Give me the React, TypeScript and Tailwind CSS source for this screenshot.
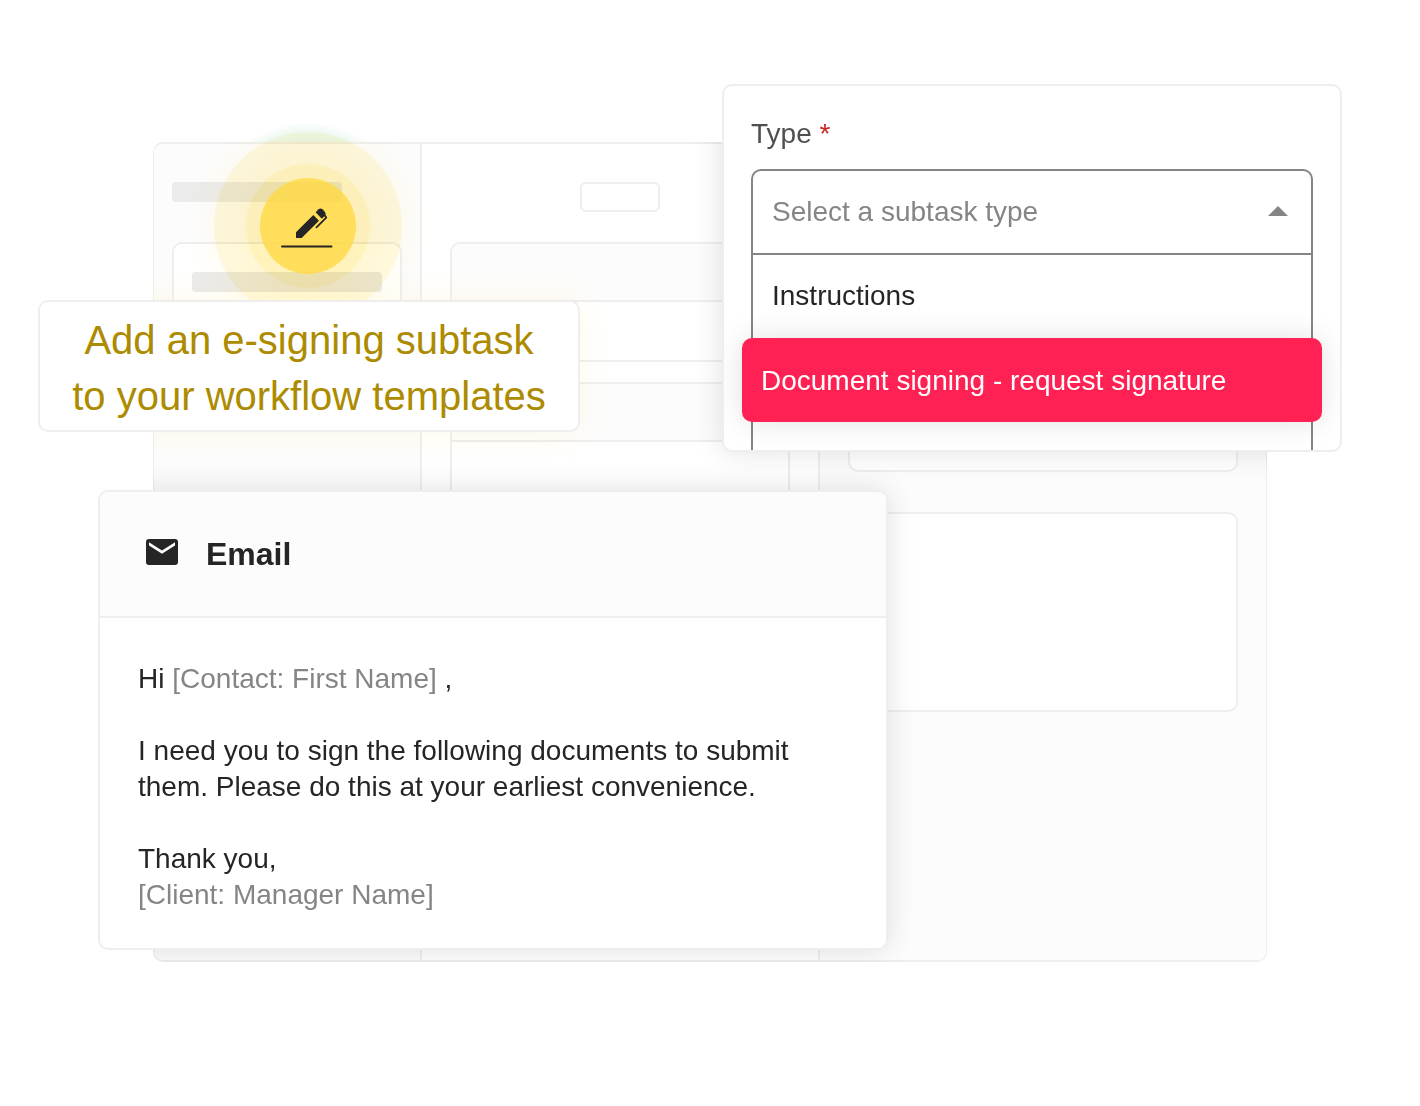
import { useState } from 'react'

const SUBTASK_TYPES = ['Instructions', 'Document signing - request signature']

function SigningBadge() {
  return (
    <svg width="240" height="240" viewBox="0 0 240 240" fill="none" aria-hidden="true">
      <defs>
        <radialGradient id="halo">
          <stop offset="0.5" stopColor="#ffdf60" stopOpacity="0.14" />
          <stop offset="0.78" stopColor="#ffdf60" stopOpacity="0.06" />
          <stop offset="1" stopColor="#ffdf60" stopOpacity="0" />
        </radialGradient>
        <radialGradient id="leaf">
          <stop offset="0.6" stopColor="#a8dcb8" stopOpacity="0.5" />
          <stop offset="0.9" stopColor="#a8dcb8" stopOpacity="0.2" />
          <stop offset="1" stopColor="#a8dcb8" stopOpacity="0" />
        </radialGradient>
        <clipPath id="aboveBoard">
          <rect width="240" height="36" />
        </clipPath>
        <clipPath id="onBoard">
          <rect y="36" width="240" height="204" />
        </clipPath>
      </defs>
      <g className="mix-blend-multiply">
        <circle cx="120" cy="120" r="120" fill="url(#halo)" clipPath="url(#onBoard)" />
        <circle cx="120" cy="120" r="94" fill="#ffdf60" fillOpacity="0.16" />
        <circle cx="120" cy="120" r="104" fill="url(#leaf)" clipPath="url(#aboveBoard)" />
        <circle cx="120" cy="120" r="62" fill="#ffdf60" fillOpacity="0.2" />
      </g>
      <circle cx="120" cy="120" r="48" fill="#ffd840" fillOpacity="0.78" />
      <path d="M108 132v-5.700l17.300-17.300 5.700 5.700L113.700 132z" fill="#252525" />
      <path d="M127.600 106.300l3-3q1.900-1.700 3.800 0l2.400 2.400q1.700 1.900 0.300 3.800l-3.300 3.300z" fill="#252525" />
      <path d="M136.500 109l1.700 2.600-10.200 10.200" stroke="#252525" strokeWidth="1.800" strokeLinejoin="round" />
      <path d="M94 140.500h49.500" stroke="#252525" strokeWidth="2" strokeLinecap="round" />
    </svg>
  )
}

function MailIcon() {
  return (
    <svg width="32" height="30" viewBox="0 0 32 30" aria-hidden="true">
      <rect width="32" height="26" rx="3" fill="#252525" />
      <path d="M3 3.200l13 8.300 13-8.300v3.200L16 14.700 3 6.400z" fill="#fcfcfc" />
    </svg>
  )
}

// Empty app layout behind the cards
function Board() {
  return (
    <div className="flex h-[820px] overflow-hidden rounded-[10px] border-x border-y-2 border-[#eeeeee] bg-white">
      <div className="w-[268px] shrink-0 border-r-2 border-[#eeeeee] bg-[#fcfcfc] px-[18px] pt-[38px]">
        <div className="h-5 w-[170px] rounded bg-[#ebebeb]" />
        <div className="mt-10 h-40 rounded-[10px] border-2 border-[#eeeeee] bg-white p-[18px] pt-7">
          <div className="h-5 rounded bg-[#ebebeb]" />
        </div>
      </div>

      <div className="min-w-0 flex-1 px-7 pt-[38px]">
        <div className="mx-auto h-[30px] w-20 rounded-md border-2 border-[#eeeeee]" />
        <div className="mt-[30px] h-[120px] overflow-hidden rounded-t-[10px] border-2 border-[#eeeeee]">
          <div className="h-[58px] border-b-2 border-[#eeeeee] bg-[#fcfcfc]" />
        </div>
        <div className="mt-5 h-60 border-2 border-[#eeeeee]">
          <div className="h-[58px] border-b-2 border-[#eeeeee] bg-[#fcfcfc]" />
        </div>
      </div>

      <div className="w-[448px] shrink-0 border-l-2 border-[#eeeeee] bg-[#fcfcfc] px-7 pt-[38px]">
        <div className="h-[290px] rounded-[10px] border-2 border-[#eeeeee] bg-white" />
        <div className="mt-10 h-[200px] rounded-[10px] border-2 border-[#eeeeee] bg-white" />
      </div>
    </div>
  )
}

// The cards only cast a shadow on the board, never on the page around it
function BoardShadows() {
  return (
    <div className="pointer-events-none absolute inset-0 overflow-hidden rounded-[10px]">
      <div className="absolute top-[158px] -left-[115px] h-[132px] w-[542px] rounded-[10px] shadow-[0_0_30px_rgba(255,222,96,0.15)]" />
      <div className="absolute -top-[58px] -right-[75px] h-[368px] w-[620px] rounded-[10px] shadow-[0_0_30px_rgba(0,0,0,0.12)]" />
      <div className="absolute top-[348px] -left-[55px] h-[460px] w-[790px] rounded-[10px] shadow-[0_0_30px_rgba(0,0,0,0.12)]" />
    </div>
  )
}

function TypeCard() {
  const [selected, setSelected] = useState(SUBTASK_TYPES[1])

  return (
    <section className="absolute -top-[58px] -right-[75px] h-[368px] w-[620px] overflow-hidden rounded-[10px] border-2 border-[#eeeeee] bg-white px-[27px] pt-[30px]">
      <label htmlFor="subtask-type" className="block text-[28px] leading-9 text-[#505050]">
        Type <span className="text-[#c62828]">*</span>
      </label>
      <div className="mt-[17px] h-[320px] rounded-[10px] border-2 border-[#858585]">
        <div className="relative border-b-2 border-[#858585]">
          <select
            id="subtask-type"
            defaultValue=""
            className="block h-[82px] w-full appearance-none bg-transparent px-[19px] text-[28px] text-[#858585] outline-none"
          >
            <option value="">Select a subtask type</option>
          </select>
          <svg width="20" height="10" viewBox="0 0 20 10" className="pointer-events-none absolute top-[35px] right-[23px]" aria-hidden="true">
            <path d="M0 10L10 0l10 10z" fill="#858585" />
          </svg>
        </div>
        {SUBTASK_TYPES.map(type => (
          <button
            key={type}
            onClick={() => setSelected(type)}
            className={`block px-[19px] text-left text-[28px] ${
              type === selected
                ? '-mx-[11px] h-[84px] w-[580px] rounded-[10px] bg-[#ff2153] pt-0.5 text-white shadow-[0_0_30px_rgba(0,0,0,0.12)]'
                : 'h-[83px] w-full pb-0.5 text-[#252525]'
            }`}
          >
            {type}
          </button>
        ))}
      </div>
    </section>
  )
}

function EmailCard() {
  return (
    <article className="absolute top-[348px] -left-[55px] w-[790px] overflow-hidden rounded-[10px] border-2 border-[#eeeeee] bg-white text-[#252525]">
      <header className="flex h-[126px] items-center gap-7 border-b-2 border-[#eeeeee] bg-[#fcfcfc] px-[46px]">
        <MailIcon />
        <h2 className="text-[32px] leading-10 font-bold">Email</h2>
      </header>
      <div className="h-[330px] px-[38px] pt-[43px] text-[28px] leading-9 whitespace-nowrap">
        <p>
          Hi <span className="text-[#858585]">[Contact: First Name]</span> ,
        </p>
        <p className="mt-9">
          I need you to sign the following documents to submit
          <br />
          them. Please do this at your earliest convenience.
        </p>
        <p className="mt-9">
          Thank you,
          <br />
          <span className="text-[#858585]">[Client: Manager Name]</span>
        </p>
      </div>
    </article>
  )
}

export default function App() {
  return (
    <main className="flex min-h-screen items-center overflow-hidden bg-white px-[153px] pb-0.5 font-['Liberation_Sans',sans-serif]">
      <div className="relative w-full">
        <Board />
        <BoardShadows />
        <div className="absolute -top-9 left-[35px]">
          <SigningBadge />
        </div>
        <h1 className="absolute top-[158px] -left-[115px] w-[542px] rounded-[10px] border-2 border-[#eeeeee] bg-white pt-2.5 pb-1.5 text-center text-[40px] leading-[56px] whitespace-nowrap text-[#ad8b00]">
          Add an e-signing subtask
          <br />
          to your workflow templates
        </h1>
        <TypeCard />
        <EmailCard />
      </div>
    </main>
  )
}
